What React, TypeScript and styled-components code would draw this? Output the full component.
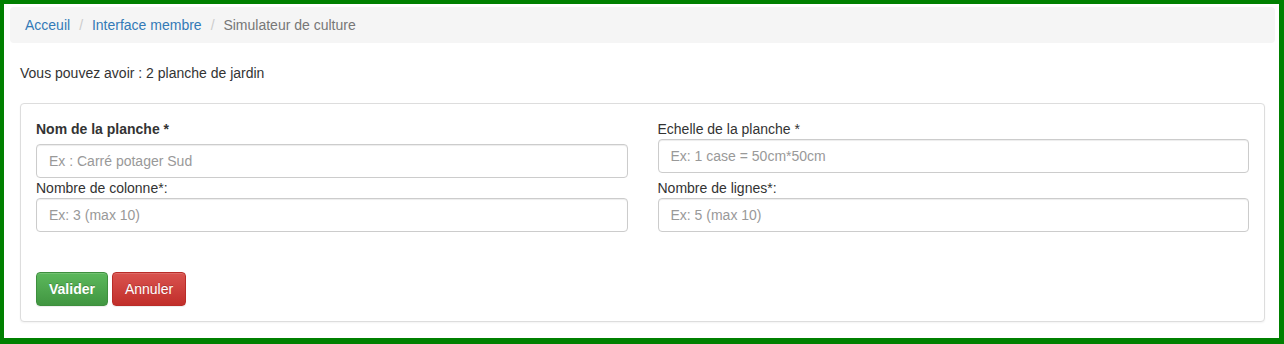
import React from "react";
import styled, { createGlobalStyle } from "styled-components";

const GlobalStyle = createGlobalStyle`
  html, body {
    margin: 0;
    padding: 0;
    background: #fff;
  }
  body {
    font-family: "Liberation Sans", Arial, Helvetica, sans-serif;
    font-size: 14px;
    line-height: 20px;
    color: #333;
  }
  * {
    box-sizing: border-box;
  }
`;

const Frame = styled.div`
  width: 1284px;
  height: 344px;
  border-style: solid;
  border-color: #008000;
  border-width: 4px 5px 6px 4px;
  padding: 3px 4px 0 6px;
  background: #fff;
`;

const Breadcrumb = styled.ol`
  list-style: none;
  margin: 0 0 20px;
  padding: 8px 15px;
  background: #f5f5f5;
  border-radius: 4px;
  display: flex;
  gap: 4px;

  li + li::before {
    content: "/\\00a0";
    padding: 0 5px;
    color: #ccc;
  }
`;

const Crumb = styled.li<{ $active?: boolean }>`
  color: ${(p) => (p.$active ? "#777" : "#337ab7")};
`;

const Content = styled.div`
  padding: 0 10px;
`;

const Intro = styled.p`
  margin: 0 0 20px;
`;

const Panel = styled.div`
  border: 1px solid #ddd;
  border-radius: 4px;
  box-shadow: 0 1px 2px rgba(0, 0, 0, 0.05);
  padding: 15px;
  background: #fff;
`;

const Row = styled.div`
  display: grid;
  grid-template-columns: 1fr 1fr;
  margin: 0 -15px;
`;

const Col = styled.div`
  padding: 0 15px;
  display: flex;
  flex-direction: column;
`;

const Label = styled.label<{ $bold?: boolean; $gap?: number }>`
  display: block;
  font-weight: ${(p) => (p.$bold ? 700 : 400)};
  margin-bottom: ${(p) => p.$gap ?? 0}px;
`;

const Input = styled.input<{ $after?: number }>`
  display: block;
  width: 100%;
  height: 34px;
  padding: 6px 12px;
  font-family: inherit;
  font-size: 14px;
  line-height: 20px;
  color: #555;
  background: #fff;
  border: 1px solid #ccc;
  border-radius: 4px;
  box-shadow: inset 0 1px 1px rgba(0, 0, 0, 0.075);
  margin-bottom: ${(p) => p.$after ?? 0}px;
  &::placeholder {
    color: #999;
  }
`;

const Actions = styled.div`
  display: flex;
  gap: 4px;
  margin-top: 40px;
`;

const Button = styled.button<{ $variant: "success" | "danger" }>`
  height: 34px;
  padding: 6px 12px;
  font-family: inherit;
  font-size: 14px;
  line-height: 20px;
  color: #fff;
  border-radius: 4px;
  cursor: pointer;
  text-shadow: 0 -1px 0 rgba(0, 0, 0, 0.2);
  box-shadow: inset 0 1px 0 rgba(255, 255, 255, 0.15), 0 1px 1px rgba(0, 0, 0, 0.075);
  font-weight: ${(p) => (p.$variant === "success" ? 700 : 400)};
  border: 1px solid ${(p) => (p.$variant === "success" ? "#3e8f3e" : "#b92c28")};
  background: ${(p) =>
    p.$variant === "success"
      ? "linear-gradient(to bottom, #5cb85c 0%, #419641 100%)"
      : "linear-gradient(to bottom, #d9534f 0%, #c12e2a 100%)"};
`;

export default function App() {
  return (
    <>
      <GlobalStyle />
      <Frame>
        <Breadcrumb>
          <Crumb>Acceuil</Crumb>
          <Crumb>Interface membre</Crumb>
          <Crumb $active>Simulateur de culture</Crumb>
        </Breadcrumb>
        <Content>
          <Intro>Vous pouvez avoir : 2 planche de jardin</Intro>
          <Panel>
            <Row>
              <Col>
                <Label $bold $gap={5}>
                  Nom de la planche *
                </Label>
                <Input placeholder="Ex : Carré potager Sud" />
                <Label>Nombre de colonne*:</Label>
                <Input placeholder="Ex: 3 (max 10)" />
              </Col>
              <Col>
                <Label>Echelle de la planche *</Label>
                <Input placeholder="Ex: 1 case = 50cm*50cm" $after={5} />
                <Label>Nombre de lignes*:</Label>
                <Input placeholder="Ex: 5 (max 10)" />
              </Col>
            </Row>
            <Actions>
              <Button $variant="success">Valider</Button>
              <Button $variant="danger">Annuler</Button>
            </Actions>
          </Panel>
        </Content>
      </Frame>
    </>
  );
}
